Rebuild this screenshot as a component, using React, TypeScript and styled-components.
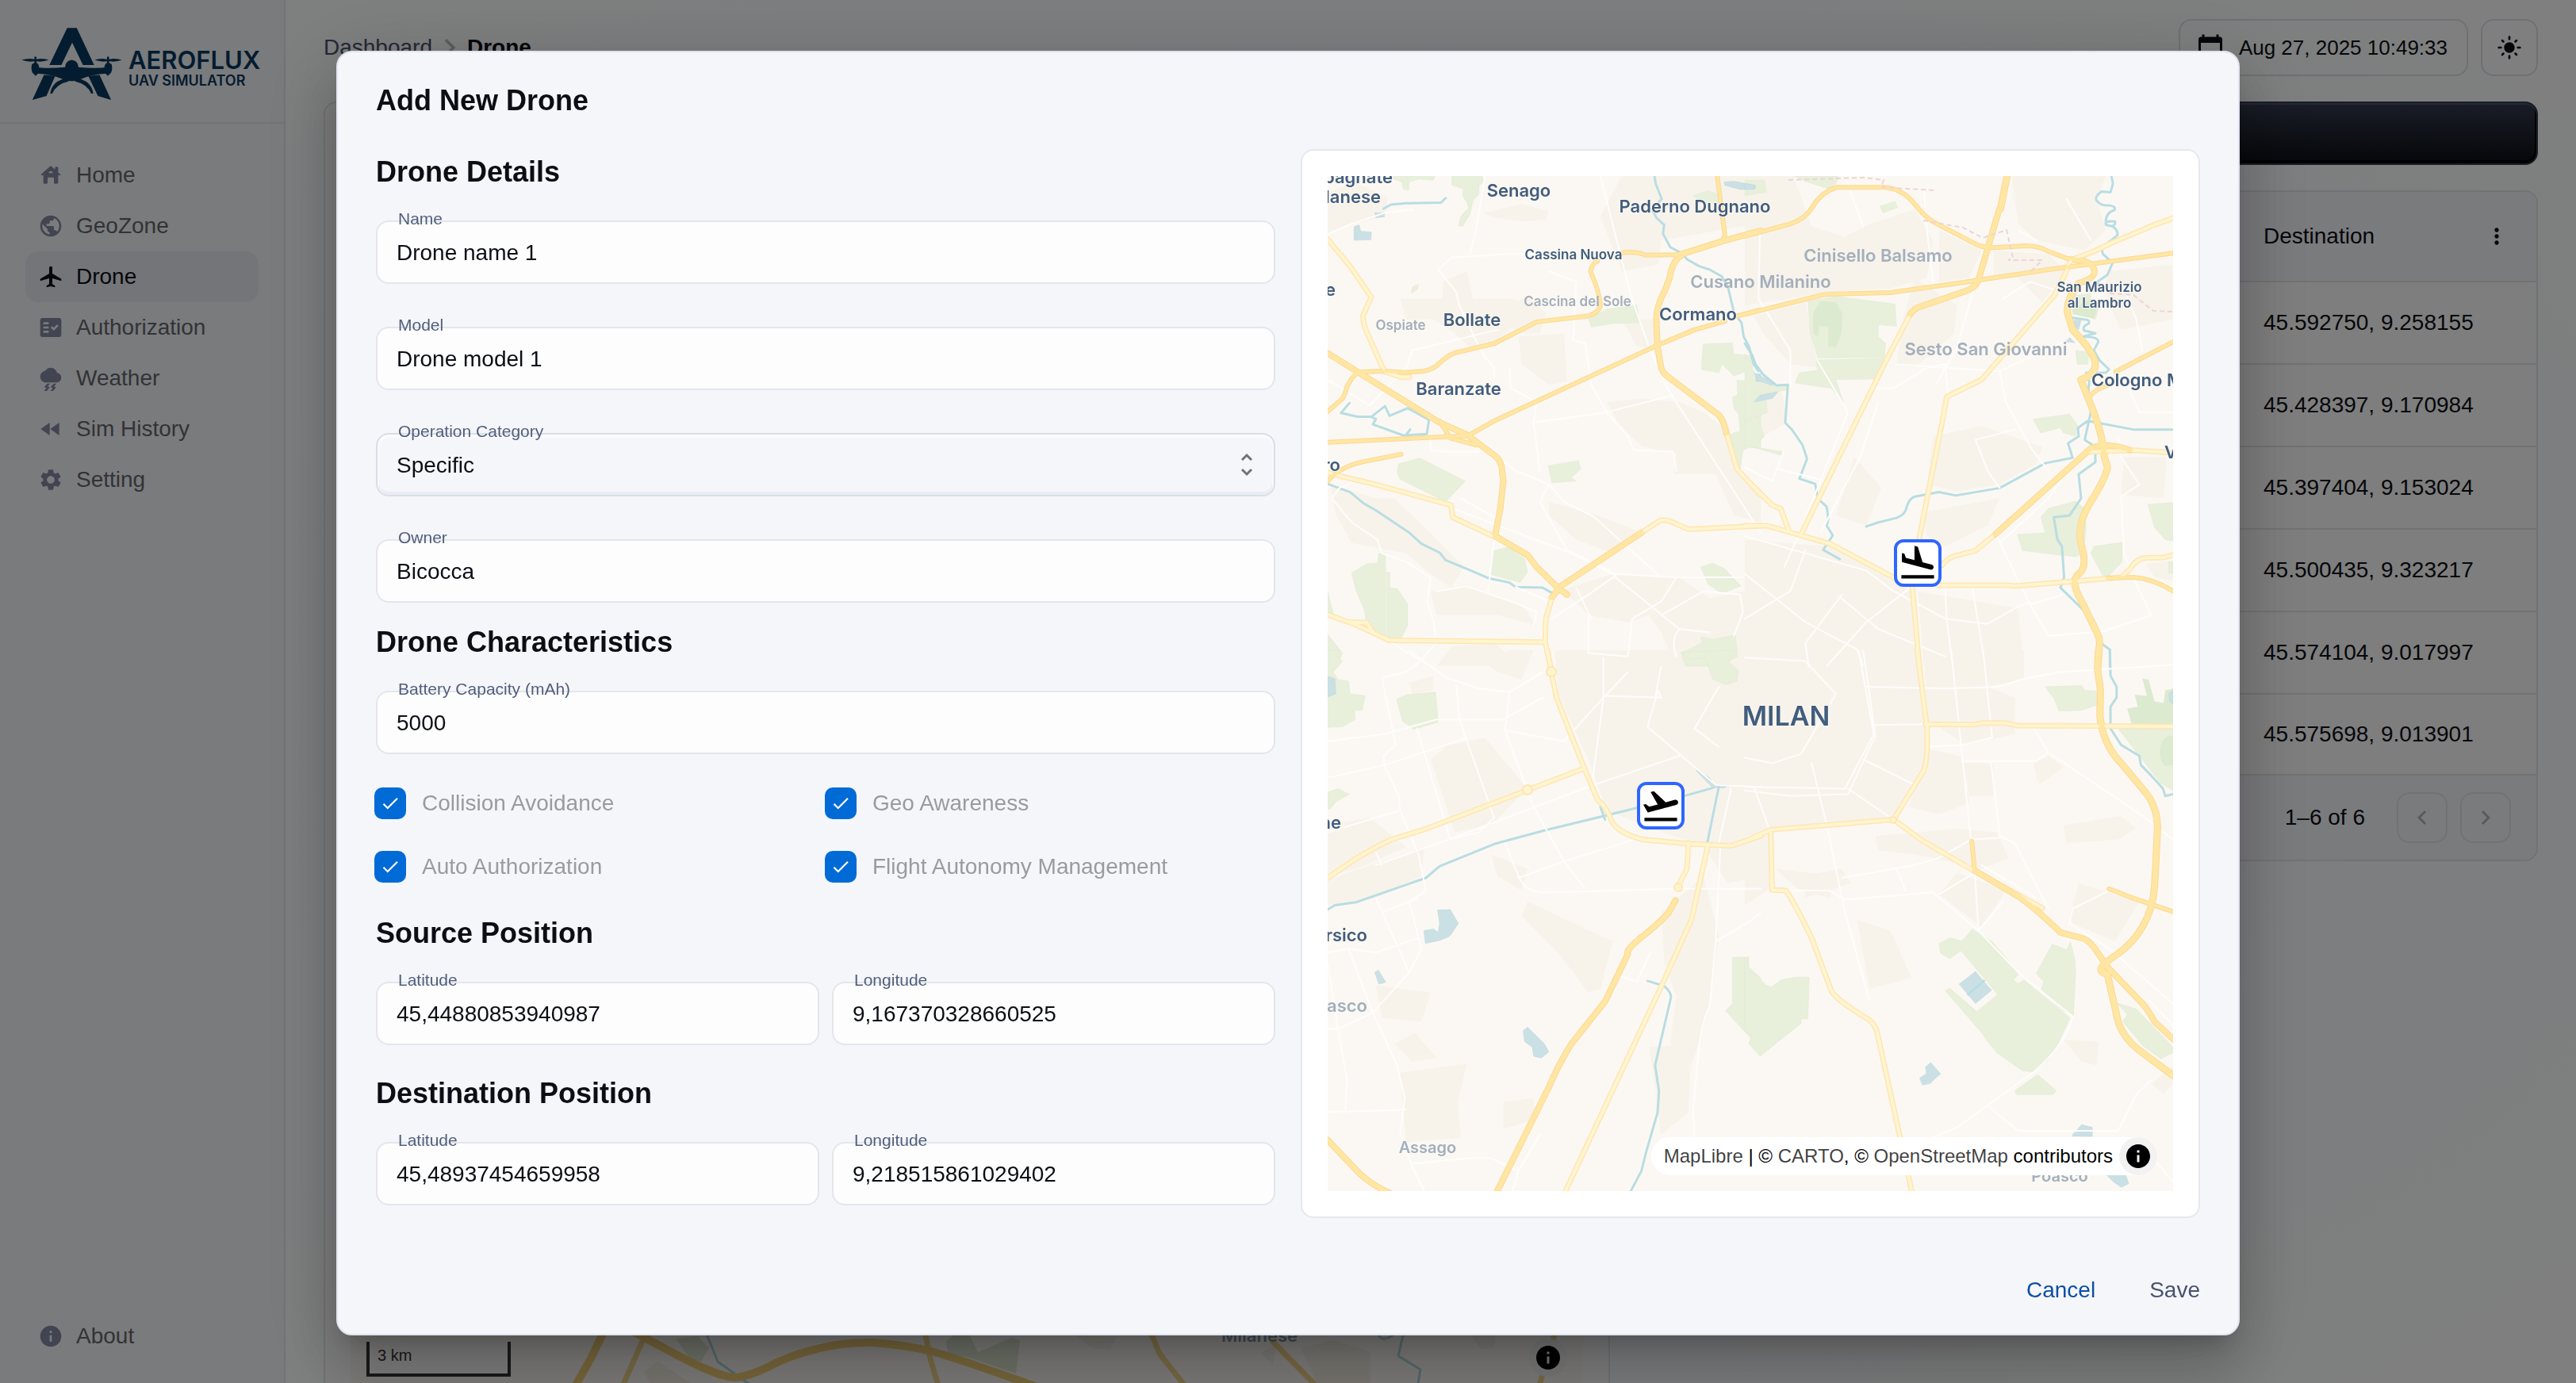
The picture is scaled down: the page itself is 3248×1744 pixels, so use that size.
import React from "react";
import styled, { createGlobalStyle, css } from "styled-components";
import {
  MdAirplanemodeActive,
  MdCalendarToday,
  MdCheck,
  MdFactCheck,
  MdFastRewind,
  MdFlightLand,
  MdFlightTakeoff,
  MdInfo,
  MdKeyboardArrowLeft,
  MdKeyboardArrowRight,
  MdLightMode,
  MdMoreVert,
  MdPublic,
  MdSettings,
  MdThunderstorm,
} from "react-icons/md";

const color = {
  ink: "#0b0e14",
  slate: "#47536b",
  label: "#515f7c",
  surface: "#f5f6fa",
  line: "#e4e6ec",
  strongLine: "#dadee7",
};

const GlobalStyle = createGlobalStyle`
  *, *::before, *::after { box-sizing: border-box; }
  html, body { margin: 0; height: 100%; overflow: hidden; }
  body {
    font-family: "Liberation Sans", Arial, sans-serif;
    font-size: 28px;
    line-height: 1.5;
    color: ${color.ink};
    background: radial-gradient(ellipse at 50% 50%, hsl(210, 100%, 97%), #ffffff);
  }
  button, input, select { font: inherit; color: inherit; }
  a { color: inherit; text-decoration: none; }
`;

/* ---------- Shell ---------- */

const Shell = styled.div`
  display: grid;
  grid-template-columns: 360px minmax(0, 1fr);
  grid-template-rows: minmax(0, 1fr);
  height: 100vh;
  overflow: hidden;
`;

const Sidebar = styled.aside`
  display: flex;
  flex-direction: column;
  background: ${color.surface};
  border-right: 2px solid #e4e6ec;
`;

const Brand = styled.div`
  display: flex;
  align-items: center;
  gap: 8px;
  height: 156px;
  padding: 8px 24px 0 26px;
  border-bottom: 2px solid #e4e6ec;
  color: #08385e;
  font-family: Inter, "Open Sans", sans-serif;
  font-weight: 600;
  white-space: nowrap;
`;

const BrandMark = styled.svg`
  flex: none;
  width: 128px;
  height: 92px;
`;

const BrandName = styled.div`
  font-size: 31px;
  line-height: 32px;
  padding-top: 10px;
`;

const BrandTag = styled.div`
  font-size: 18px;
  line-height: 20px;
`;

const Nav = styled.nav`
  display: flex;
  flex: 1;
  flex-direction: column;
  justify-content: space-between;
  padding: 33px 32px 27px;
`;

const NavList = styled.ul`
  margin: 0;
  padding: 0;
  list-style: none;
`;

const NavLink = styled.a<{ $active?: boolean }>`
  display: flex;
  align-items: center;
  gap: 16px;
  height: 64px;
  padding: 0 16px;
  border-radius: 16px;
  color: #65676c;
  svg {
    width: 32px;
    height: 32px;
    color: #838ba3;
  }
  ${(p) =>
    p.$active &&
    css`
      background: #e9ebf2;
      color: ${color.ink};
      svg {
        color: ${color.ink};
      }
    `}
`;

const Main = styled.main`
  display: flex;
  flex-direction: column;
  gap: 32px;
  min-width: 0;
  padding: 24px 48px;
`;

const TopBar = styled.header`
  display: flex;
  flex: none;
  align-items: center;
  justify-content: space-between;
  height: 72px;
`;

const Crumbs = styled.nav`
  display: flex;
  align-items: center;
  color: ${color.slate};
  svg {
    width: 44px;
    height: 44px;
    color: #b8babf;
  }
  strong {
    color: ${color.ink};
  }
`;

const TopActions = styled.div`
  display: flex;
  gap: 16px;
`;

const OutlineButton = styled.button<{ $square?: boolean }>`
  display: flex;
  align-items: center;
  justify-content: center;
  gap: 18px;
  height: 72px;
  min-width: 72px;
  padding: ${(p) => (p.$square ? "0" : "0 24px 0 20px")};
  border: 2px solid #dfe1ea;
  border-radius: 16px;
  background: transparent;
  font-size: 26px;
`;

const Board = styled.div`
  display: grid;
  grid-template-columns: repeat(12, minmax(0, 1fr));
  gap: 16px;
  align-items: start;
`;

const MapCard = styled.section`
  grid-column: span 7;
  padding: 32px;
  border: 2px solid ${color.line};
  border-radius: 16px;
  background: #fdfdfd;
`;

const SideColumn = styled.section`
  grid-column: span 5;
  display: flex;
  flex-direction: column;
  gap: 32px;
`;

const DarkButton = styled.button`
  height: 80px;
  border: 2px solid #333a4d;
  border-radius: 16px;
  background: linear-gradient(to bottom, #333a4d, #0b0e14);
  box-shadow: inset 0 2px 0 #47536b, inset 0 -2px 0 2px #000000;
`;

const TableCard = styled.div`
  border: 2px solid #e2e4ea;
  border-radius: 16px;
  background: #fdfdfd;
  overflow: hidden;
`;

const Table = styled.table`
  width: 100%;
  border-collapse: separate;
  border-spacing: 0;
  text-align: left;
  th,
  td {
    height: 104px;
    padding: 0 34px 0 20px;
    border-bottom: 2px solid #e2e4ea;
    font-weight: 400;
  }
  th {
    height: 114px;
    background: ${color.surface};
  }
  tr:last-child td {
    height: 102px;
  }
  th:last-child,
  td:last-child {
    width: 364px;
  }
`;

const HeadCell = styled.div`
  display: flex;
  align-items: center;
  justify-content: space-between;
`;

const IconButton = styled.button`
  display: grid;
  place-items: center;
  padding: 0;
  border: 0;
  background: none;
  svg {
    width: 32px;
    height: 32px;
  }
`;

const TableFoot = styled.div`
  display: flex;
  align-items: center;
  justify-content: flex-end;
  gap: 16px;
  height: 106px;
  padding: 0 32px;
  background: ${color.surface};
`;

const PageCount = styled.span`
  padding-right: 24px;
`;

const PageButton = styled.button`
  display: grid;
  place-items: center;
  width: 64px;
  height: 64px;
  border: 2px solid #e2e4ea;
  border-radius: 16px;
  background: none;
  color: #b4b6bb;
  svg {
    width: 36px;
    height: 36px;
  }
`;

/* ---------- Map pieces ---------- */

const MapFrame = styled.div<{ $tall?: boolean }>`
  position: relative;
  overflow: hidden;
  background: #fbf8f3;
  ${(p) =>
    p.$tall
      ? css`
          height: calc(100vh - 150px);
        `
      : css`
          aspect-ratio: 533 / 640;
        `}
`;

const MapSvg = styled.svg`
  display: block;
  width: 100%;
  height: 100%;
  font-family: Inter, "Open Sans", sans-serif;
  font-weight: 600;
`;

const Pin = styled.div<{ $x: number; $y: number }>`
  position: absolute;
  left: ${(p) => p.$x}%;
  top: ${(p) => p.$y}%;
  width: 60px;
  height: 60px;
  transform: translate(-50%, -50%);
  border: 4px solid #2f66ff;
  border-radius: 12px;
  background: #ffffff;
  color: #000000;
  svg {
    display: block;
    width: 52px;
    height: 52px;
  }
`;

const Attribution = styled.div`
  position: absolute;
  right: 20px;
  bottom: 20px;
  height: 48px;
  padding: 0 56px 0 16px;
  border-radius: 24px;
  background: #ffffff;
  color: #000000;
  font-size: 24px;
  line-height: 48px;
  white-space: nowrap;
  a {
    color: rgba(0, 0, 0, 0.75);
  }
`;

const InfoButton = styled.button`
  position: absolute;
  right: 20px;
  bottom: 20px;
  display: grid;
  place-items: center;
  width: 48px;
  height: 48px;
  padding: 0;
  border: 0;
  border-radius: 50%;
  background: #f2f2f2;
  color: #000000;
  svg {
    width: 36px;
    height: 36px;
  }
`;

const ScaleBar = styled.div`
  position: absolute;
  left: 20px;
  bottom: 20px;
  width: 182px;
  height: 44px;
  padding-left: 10px;
  border: 4px solid #333333;
  border-top: 0;
  background: rgba(255, 255, 255, 0.75);
  color: #333333;
  font-size: 20px;
  line-height: 34px;
`;

/* ---------- Dialog ---------- */

const Backdrop = styled.div`
  position: fixed;
  inset: 0;
  display: flex;
  align-items: flex-start;
  justify-content: center;
  padding: 64px;
  background: rgba(0, 0, 0, 0.5);
`;

const Dialog = styled.div`
  width: 100%;
  max-width: 2400px;
  border: 2px solid #dfe4ee;
  border-radius: 20px;
  background: ${color.surface};
  box-shadow: 0 22px 30px -14px rgba(0, 0, 0, 0.2), 0 48px 76px 6px rgba(0, 0, 0, 0.14),
    0 18px 92px 16px rgba(0, 0, 0, 0.12);
`;

const heading = css`
  margin: 0;
  font-size: 36px;
  line-height: 54px;
  font-weight: 700;
`;

const DialogTitle = styled.h2`
  ${heading}
  padding: 34px 48px;
`;

const DialogBody = styled.div`
  display: grid;
  grid-template-columns: repeat(2, minmax(0, 1fr));
  gap: 32px;
  padding: 0 48px;
`;

const DialogActions = styled.div`
  display: flex;
  justify-content: flex-end;
  gap: 36px;
  padding: 55px 32px 19px;
`;

const TextButton = styled.button<{ $primary?: boolean }>`
  height: 72px;
  padding: 0 16px;
  border: 0;
  border-radius: 16px;
  background: none;
  color: ${(p) => (p.$primary ? "#0a4fa6" : color.slate)};
`;

const MapPanel = styled.div`
  align-self: start;
  padding: 32px;
  border: 2px solid #e6e8f0;
  border-radius: 16px;
  background: #ffffff;
`;

const FormSection = styled.section<{ $top?: number }>`
  padding-top: ${(p) => p.$top ?? 0}px;
`;

const SectionTitle = styled.h3`
  ${heading}
  padding-top: 2px;
`;

const Fields = styled.div<{ $columns?: number }>`
  display: grid;
  grid-template-columns: repeat(${(p) => p.$columns ?? 1}, minmax(0, 1fr));
  gap: 20px 16px;
`;

const FieldBox = styled.div`
  position: relative;
  padding-top: 34px;
`;

const FieldLabel = styled.label`
  position: absolute;
  top: 20px;
  left: 28px;
  color: ${color.label};
  font-size: 21px;
  line-height: 24px;
`;

const control = css`
  display: block;
  width: 100%;
  height: 80px;
  margin: 0;
  padding: 1px 24px 0;
  border: 2px solid #e4e6ec;
  border-radius: 16px;
  background: #fdfdfd;
  outline: none;
`;

const TextInput = styled.input`
  ${control}
`;

const Select = styled.select`
  ${control}
  appearance: none;
  border-color: ${color.strongLine};
  background: ${color.surface};
  box-shadow: inset 0 2px 0 2px rgba(255, 255, 255, 0.6), inset 0 -2px 0 2px rgba(220, 227, 239, 0.5);
`;

const SelectArrows = styled.svg`
  position: absolute;
  right: 18px;
  bottom: 22px;
  width: 36px;
  height: 36px;
  pointer-events: none;
`;

const CheckGrid = styled.div`
  display: grid;
  grid-template-columns: repeat(2, minmax(0, 1fr));
  margin-left: -2px;
  padding-top: 22px;
`;

const CheckLabel = styled.label`
  display: flex;
  align-items: center;
  gap: 20px;
  height: 80px;
  color: #999b9f;
`;

const CheckWrap = styled.span`
  display: grid;
  place-items: center;
  color: #ffffff;
  > * {
    grid-area: 1 / 1;
  }
  svg {
    width: 26px;
    height: 26px;
    pointer-events: none;
  }
`;

const CheckInput = styled.input`
  width: 40px;
  height: 40px;
  margin: 0;
  border-radius: 10px;
  appearance: none;
  background: #d5dae4;
  &:checked {
    background: #006bd6;
  }
`;

/* ---------- Map data: four sheets that tile the city ---------- */

type Sheet = {
  transform: string;
  urban: string;
  parks: string;
  woods?: string;
  water: string;
  rivers: string;
  minor: string;
  primary: string;
  trunk: string;
  motorway: string;
};

const sheets: Sheet[] = [
  {
    transform: "translate(1620 160) scale(.38265 .43367)",
    urban:
      "M850 143H1110L1040 260 1110 420 1230 400 1240 330 1568 280V143ZM650 250L780 225 870 245 860 270 790 275 700 265ZM141 190L230 160 340 205 330 260 210 285 141 312ZM520 450L600 420 620 500 760 500 780 560 700 620 610 640 560 600 490 560 400 560 380 500 520 500ZM720 520L800 495 860 540 840 600 760 600ZM770 610L920 600 930 740 870 750 780 690ZM1110 560L1220 560 1230 640 1160 640ZM1060 800L1180 790 1300 800 1380 830 1440 870 1490 1000 1568 1080V1150L1480 1130 1420 1010 1280 1010 1290 950 1180 930 1140 900 1100 860ZM870 1090L1030 1130 1180 1180 1080 1240 960 1200 870 1130ZM150 1040L300 1080 360 1080 480 1180 590 1280 550 1340 480 1300 400 1240 220 1210 170 1130ZM900 1350L1080 1300 1300 1310 1400 1370 1568 1340V1568H1290L1240 1470 1200 1420 1130 1440 1000 1420 960 1380ZM480 1350L600 1330 780 1390 830 1450 700 1420 500 1420ZM550 1510L690 1500 780 1568H500Z",
    parks:
      "M355 143H495L490 155 440 152 410 160 408 185 390 180 385 160 360 152ZM550 143H650L655 160 640 170 640 195 620 215 610 255 585 290 572 288 580 260 605 235 600 220 585 200 588 180 550 170ZM417 485L420 465 440 458 438 470ZM1000 560L1060 530 1160 518 1170 570 1080 572 1010 582ZM1378 632L1475 628 1478 660 1545 665 1540 705 1480 724 1440 690 1430 715 1372 705ZM1490 737L1568 740V935L1530 932 1510 940 1500 1000 1485 990 1460 895 1500 885 1495 835 1480 820 1475 785 1492 780ZM375 980L445 963 595 1030 530 1090 380 1025 370 1005ZM868 985L968 970 975 995 945 1020 960 1030 880 1035ZM688 1232L735 1222 790 1255 800 1295 775 1325 680 1302ZM220 1297L270 1270 305 1268 310 1240 332 1240V1480L290 1460 270 1445 260 1400 235 1350ZM335 1295H346V1340L370 1342 405 1388V1450L385 1485 335 1490ZM1370 1280L1410 1268 1450 1285 1503 1335 1440 1357 1395 1330ZM1305 1530L1375 1500 1370 1482 1410 1490 1485 1477 1492 1540 1440 1568H1320ZM141 1475L190 1530 180 1555 141 1568ZM141 1350L160 1415H141ZM1345 200L1395 185 1440 200V225L1380 220Z",
    water:
      "M228 290L245 285 250 303 285 306 284 328 228 330ZM296 250H328V262L300 264ZM1447 160L1480 158 1550 170V180L1500 182 1450 170ZM1552 718H1568V740H1552Z",
    rivers:
      "M325 238L350 226 400 222 515 220 530 207M1218 143L1222 165 1242 210 1210 240 1225 265 1250 285 1246 310 1270 350 1310 368 1325 385 1365 405 1400 415 1440 435 1460 465 1472 510 1480 540 1505 570 1512 610 1530 640 1545 690 1560 710M141 1038L215 1062 260 1095 300 1115 410 1180 450 1212 510 1238 530 1260 600 1285 670 1312 740 1325 760 1338 850 1340 880 1355M213 803L185 832 240 843 285 843 330 812 345 840 405 818 475 852 468 893 390 897 290 865 300 850 285 843M400 895L413 880",
    minor:
      "M141 312L210 285 330 250 420 240M660 143L630 300 610 370M505 415L550 380 720 370 860 370M505 415L565 480 575 520 640 640 660 670 690 700V730M1040 143L1140 490 1200 640 1260 760 1568 1180M141 735L280 810 400 700 420 650 700 590M740 700L745 760 830 800 820 860 840 1000M815 860L1060 830 1280 780M870 420L960 450 950 620 990 630 1010 750 1060 830 1130 900 1150 940 1280 945 1290 1000M480 900L480 940 530 945 640 945M600 890L760 1000 870 1040 920 1090 1020 1135 1240 1310M870 1040L840 1090 930 1230 1090 1300 1280 1310 1510 1310M555 1110L930 1235 1090 1305M580 1080L640 1110 700 1140M155 1080L180 1050 240 1030M155 1080L220 1150 305 1200 320 1240 400 1265 480 1310 470 1380 490 1440 500 1500 430 1568M670 1350L690 1200M500 1350L600 1335 760 1385 830 1410 820 1450M350 1500L480 1568M880 1430L1000 1360 1090 1305M1000 1420L1000 1530 1130 1540 1145 1430 1240 1380 1290 1310M1090 1310L1300 1460 1400 1470M1300 1460Q1270 1490 1290 1540M1240 1420L1380 1350 1500 1360 1510 1410 1480 1480M960 1340L1010 1430M760 1338L860 1375",
    primary:
      "M141 327L215 405 285 495 257 550 262 580 318 692 330 712 385 728 410 727M141 1005L180 1015 300 1040 548 1100 553 1135 693 1193M1175 1180L1235 1145Q1260 1140 1290 1155L1330 1170 1568 1160M1455 890L1490 995 1568 1070M880 1370L860 1430 858 1498 875 1568M141 1418L235 1448 345 1493 858 1498M215 1440L270 1442 290 1468",
    trunk:
      "M141 828L190 790Q200 775 205 755Q225 720 245 713L320 710 400 714 460 710Q485 705 500 695 540 660 570 655L690 630 830 567 1000 550Q1035 540 1040 520 1037 480 1007 420 1015 395 1030 390M1107 367Q1150 360 1190 373L1300 372M1490 550L1568 532M141 917L600 898 620 890 690 855 1228 635 1350 590 1450 565M510 855L545 905 630 925M141 1030Q180 990 250 975L383 952M1425 143L1450 315 1440 333",
    motorway:
      "M141 658L250 718 510 860 600 895 690 955Q715 970 716 1000L720 1030 710 1110 693 1190 800 1245 830 1280 900 1340 930 1360M1300 372L1440 333 1568 302M1310 372Q1275 390 1268 440L1250 480Q1225 520 1224 560L1228 640 1240 700Q1245 715 1260 725L1430 838Q1445 850 1455 890M880 1368L910 1335 1175 1180",
  },
  {
    transform: "translate(2200 160) scale(.38265 .43367)",
    urban:
      "M0 143H160L220 290 330 320 420 280 560 240 620 330 600 440 480 470 280 480 0 520ZM640 300L780 360 740 440 640 450ZM820 360L1000 370 1060 420 980 510 900 440 820 440ZM880 143H1190L1160 210 1190 300 1120 360 960 330 900 280ZM30 550L200 510 240 700 150 690 60 600ZM560 440L700 520 690 600 560 700 500 690 520 560ZM1190 420L1411 400V560L1240 590 1190 500ZM620 900L780 870 980 930 960 980 840 1040 700 1060 600 1040ZM0 740L120 760 140 860 0 930ZM360 960L450 1050 400 1160 300 1130ZM0 1200L280 1220 490 1320 545 1340 575 1568H0ZM570 1350L900 1400 920 1568H590ZM590 1120L840 1080 800 1160 660 1220 600 1190ZM1250 960L1390 960 1380 1080 1240 1070ZM1320 1270L1411 1260V1320L1350 1310Z",
    parks:
      "M208 507L310 492 320 495 495 515 500 580 440 575 440 610 465 630 460 670 240 672 230 640 215 600ZM235 678L465 672 430 733 300 735 325 800 285 760 165 745 180 715 240 708ZM0 660L20 690 40 735 100 750 140 755 140 765 100 770 70 790 75 830 0 860ZM0 850L40 840 65 900 30 930 125 945 120 955 0 925ZM160 143H310L300 165 275 180 240 170 205 160ZM445 230L495 217 503 235 455 250ZM0 155L65 155 70 190 0 200ZM950 850L1070 835 1098 870 1090 900 1050 890 1040 875 975 890ZM898 1185L990 1180 975 1135 1000 1110 1090 1088 1120 1110 1125 1170 1115 1240 1090 1250 1035 1245 915 1232ZM1140 1240L1150 1220 1243 1208V1265L1200 1305H1180ZM1328 1098L1411 1092V1205L1385 1200 1350 1165ZM1078 490L1140 485V510L1165 530 1155 560 1080 540ZM1090 650L1135 655 1130 690 1095 690ZM1397 1265h14v33h-14z",
    woods:
      "M225 540L250 507 300 510 322 545 318 600 300 640 275 640 275 580 245 580 240 610 225 600ZM1080 530L1140 500 1160 535 1150 557 1080 545Z",
    water:
      "M30 715L100 745 90 752 45 738ZM30 800L50 780 110 770 90 790ZM1085 562H1108L1100 590 1085 580ZM1058 625L1070 612 1088 628ZM0 165L35 170 30 182H0Z",
    rivers:
      "M1208 143L1213 165 1205 190 1175 188Q1150 205 1160 215 1175 230 1195 228 1225 230 1218 242 1185 250 1190 285 1222 295 1220 275 1185 272 1190 285 1230 290 1228 315L1175 352 1180 370 1212 395 1195 430 1162 450 1165 460M1080 555L1115 560Q1140 560 1133 572 1110 580 1118 592L1155 600 1115 610Q1165 610 1165 625L1150 650 1170 680 1200 705 1190 715 1125 715 1135 740 1130 790 1140 830 1120 910 1155 930 1155 975 1100 1010 1108 1080 1070 1130 1018 1135 1030 1200 1045 1220 1052 1310 1040 1340 1110 1400 1155 1445M400 1162L440 1150 500 1137Q525 1128 530 1115 540 1080 560 1075L640 1062 695 1072 840 1050 990 978 1080 962 1065 920 1100 900 1098 875 1130 855 1280 880 1411 880M0 630L25 665 35 690 60 720 105 752 142 750 133 860 155 880 190 925 205 965 180 1023 232 1038 240 1080 270 1105 275 1140 270 1160 290 1188 258 1230 313 1257M1180 1505L1203 1520 1203 1568",
    minor:
      "M50 300L45 500 150 650V750M330 143L390 290M590 180L600 300 620 450M760 450L700 640 630 750M240 680L340 830 180 1180 130 1280M440 800L380 960 250 1180M410 760L490 760 600 700 660 690 670 780M840 710L860 800 940 930 1000 1000M500 690L650 700 840 710 1040 630M850 500L940 450 1040 480M760 910L800 1000 840 1050M760 910L890 880M0 990L90 1030 130 940M110 995L270 1030M0 1190L200 1240 400 1290 490 1350 660 1430 800 1445 890 1400 940 1380M545 1340L400 1440 270 1568M320 1360L200 1500 210 1568M660 1340L665 1430 685 1568M750 1340L785 1530M830 1190L940 1390 1000 1480 1140 1470M200 1230L150 1350 0 1430M310 1365L440 1460 660 1540M0 1300L200 1440 370 1520 390 1568M940 1390L1050 1360M1230 900L1240 960 1300 1040 1240 1075 1250 1240 1290 1330 1340 1420 1170 1470M1250 730L1300 830 1411 830M1250 470L1290 560 1310 650M1060 210L1140 330M900 300L960 330M840 1210L1000 1080 1040 1030",
    primary:
      "M545 545L465 680 185 1185M1411 265L1350 285 1215 335 1150 362 1080 385Q1065 395 1060 420L1020 490 780 735 665 785 652 850 575 1195M0 1160L75 1160 280 1212 490 1310M0 1020L90 1100 118 1110 145 1175M640 1333L870 1333 890 1335 1100 1320 1240 1310 1270 1285Q1290 1255 1320 1253L1380 1252 1411 1245M650 1275Q670 1250 700 1246L760 1232 825 1185M552 1340L575 1568M1135 945L1280 940 1411 948",
    trunk:
      "M0 318L150 282Q200 268 225 230T300 176H460Q520 180 560 225T640 285L770 345Q790 351 820 351L930 346Q970 347 1000 362L1060 382 1100 386M0 545L250 490Q260 487 300 486L480 482 700 455 1000 415 1411 367M1222 712L1411 625M1145 830L1135 785Q1150 765 1200 750M1195 1312L1280 1310Q1350 1315 1411 1350M860 143L838 240M868 143L846 240",
    motorway:
      "M838 240L770 445Q760 470 720 480L570 525Q550 535 545 545M825 1185L1140 935Q1190 915 1270 940M1085 386L1120 390Q1150 400 1152 420T1100 455",
  },
  {
    transform: "translate(1620 820) scale(.38265 .45918)",
    urban:
      "M650 30L740 0H820L780 80 700 60ZM890 0H1568V620L1460 640 1380 540 1180 480 1060 440 1000 300 900 120ZM540 260L660 240 800 380 680 480 560 500 480 300ZM141 480L280 460 400 540 240 600 141 620ZM141 630L460 540 450 620 300 680 141 700ZM800 690L1080 800 1040 930 1000 940 900 830 780 730ZM1240 720L1380 620 1430 780 1400 980 1340 1140 1270 1080 1290 950 1250 860ZM380 1160L600 1135 570 1240 580 1340 400 1350ZM360 1080L430 1050 500 1120 420 1130ZM1200 1090L1340 1080 1330 1270 1240 1330 1220 1200ZM720 1240L820 1230 820 1290 720 1315ZM680 560L800 600 780 660 700 620ZM300 920L480 940 450 1020 320 1010ZM1310 1020L1380 1010 1370 1080 1310 1080ZM410 90L490 70 490 110 420 120Z",
    parks:
      "M141 0H180L175 20 190 30 160 60 175 80 210 85 215 120 265 125 255 165 230 165 232 190 190 210 141 212ZM368 135L400 122 497 115 505 198 425 217 388 195ZM141 390L175 380 213 395 170 415 150 435H141ZM1305 5L1335 25 1385 20 1410 80 1455 95 1490 85 1495 55 1460 30 1490 0ZM1475 843H1528V870L1568 900V1115L1530 1080 1535 1065 1452 990 1475 970Z",
    water:
      "M141 72L165 78 168 120 141 128ZM503 713L545 712 572 750 548 780 540 787 510 797 463 805 458 770 490 765 505 775 510 750ZM296 885L308 878 333 912 310 917ZM785 1045L800 1035 855 1080 870 1103 845 1120 820 1115 815 1090 790 1075ZM1355 328L1400 350 1415 370 1462 370 1450 378 1410 378 1360 335Z",
    rivers:
      "M141 712L165 700 235 692 465 625 510 593 690 532 855 495 1160 433M1317 400L1410 378M1195 908L1250 922Q1275 940 1272 955L1220 1140 1233 1210 1228 1270 1190 1380 1175 1430 1140 1485M1040 430L1055 465M1430 375L1393 525",
    minor:
      "M410 0L530 75 640 105 740 115 850 60M320 75L400 60 460 20M320 75L365 260 325 290 330 320 375 400 380 440 440 560 465 660 410 690 450 820 410 885 290 995 370 1140 395 1230 380 1330 420 1420 460 1485M141 250L330 230 500 190 720 190 850 130M565 95L575 190 690 460 640 500 540 520 300 590M435 215L545 520M740 120L725 220 820 430 920 580 990 655M725 220L920 250 1050 130 1130 60M141 350L330 315 600 240M141 500L380 440M1050 20V130L1015 350M1050 125L1240 130 1230 110 1195 210 1420 370 1568 375M1240 45L1220 130M400 560L540 520 1000 375 1300 290M300 555L320 590M725 530L770 620Q790 665 860 665L1300 655 1568 655M770 625L920 580 1150 520M1430 530L1470 380M1435 540L1420 800 1400 980Q1370 1020 1360 1130L1345 1260 1350 1340M1420 800L1540 740 1568 720M141 830L210 820 300 830 440 790M320 720L440 680M300 680L410 885M210 820L290 995 175 1040 141 1040M141 860L175 1040 205 1180 200 1260M141 1268L400 1262M420 1410L600 1395 680 1395 770 1430 840 1330M770 1430L750 1485M1110 895L1160 910 1205 830M1350 215L1430 100M1350 215L1430 265",
    primary:
      "M865 0L878 60 895 130 985 320 1030 410Q1060 430 1075 465T1180 520L1340 532 1470 537 1568 510M141 625L235 572Q300 540 350 520L460 492 800 384 985 325M1330 530L1325 600 1295 650M1393 540L1340 740 1245 915 925 1485",
    trunk: "",
    motorway:
      "M1287 687L1265 720Q1240 745 1180 785T1130 835L1055 965 945 1080Q900 1140 870 1200L700 1485M141 1345L250 1440Q300 1475 345 1490",
  },
  {
    transform: "translate(2200 820) scale(.38265 .45918)",
    urban:
      "M0 0H568L600 210 590 330 490 465 85 493 0 515ZM590 0H920V80L800 100 890 130V230L730 260 600 190ZM600 270L710 290 740 420 640 450 540 430ZM0 520L80 500 90 650 0 700ZM430 510L700 490 830 500 870 570 780 600 560 560 440 550ZM100 600L300 620 280 680 180 660ZM700 610L860 660 780 760 640 670ZM370 740L480 770 550 900 410 930ZM1050 480L1240 455 1290 490 1230 520 1060 530ZM950 310L1000 290 1050 320 970 370ZM1070 730L1100 640 1300 690 1220 800 1080 750ZM1050 1070L1165 1075 1160 1140 1110 1130ZM1340 1190L1411 1140V1190L1380 1220ZM190 620L320 600 350 640 200 680ZM720 310H820V400H740Z",
    parks:
      "M0 843H12V868L70 920 88 925 120 905 165 898H212L208 1012 185 1012 185 1025 50 1115 13 1080 30 1065 0 1045ZM640 805L675 790 715 798 750 766 815 800 905 888 885 905 900 915 920 905 1072 1010 1030 1085 1000 1125 950 1158 915 1155 830 1105 800 1075 780 1050 660 935 675 928 765 992 833 945 712 825 675 847 645 832ZM1013 807L1060 822 1073 800 1088 850 1090 890 1083 1003 1050 990 975 935 985 910 960 888ZM890 1210L965 1165 1027 1210 1015 1220H895ZM990 100L1110 97 1120 110 1160 112V150L1110 165 1035 167 1020 135ZM1230 215H1411V385L1370 365 1290 280ZM1225 968L1290 985 1411 1090V1105L1370 1122 1310 1085 1245 1020 1260 1000Z",
    woods:
      "M1260 160L1295 155 1285 122 1325 125 1310 78 1330 80 1350 140 1380 145 1385 110 1411 105V205H1275ZM1375 250Q1395 230 1411 235V315L1385 318Q1365 300 1368 270Z",
    water:
      "M706 917L760 882 813 934 760 970ZM576 1175L598 1163 595 1145 612 1132 645 1163 610 1190 585 1194ZM1080 1330L1110 1303 1145 1310V1335H1080ZM1190 1440H1255L1265 1465 1240 1475 1215 1460ZM1397 120L1411 110V148L1400 140Z",
    rivers:
      "M1203 0L1205 70 1225 100 1225 130 1205 155 1205 215 1240 260 1300 290 1305 315 1340 345 1378 380 1385 400 1411 395M736 945L788 908",
    minor:
      "M0 375L330 380 425 230 375 0M0 385L150 400 340 395 430 235 390 0M400 100L660 105 840 100 910 80 1040 60 1411 40M430 205L590 203M0 20L200 30 300 120 185 285 90 310 0 295M220 310L270 480 330 720 410 960M30 375L80 490M390 300L560 370M340 380L480 460M680 0L745 520 760 640 770 770M785 0L815 240 720 260 600 265M810 300L840 510 890 530 1000 710M725 305L960 305 1000 280 950 210M1000 280L1320 460 1411 520M640 570L745 520 840 515M320 625L560 590 640 570M90 660L280 660 330 685 620 665 770 770 905 888 1080 1005Q1060 1080 950 1160L700 1310 600 1345M800 1250L900 1320 1230 1320 1290 1220 1340 1180M640 670L760 610M770 770L850 690M780 590L960 680M1200 660L1080 710 1070 750 1200 820 1411 970M1330 960L1411 1030M1340 1390L1411 1460M500 600L530 660",
    primary:
      "M568 0L600 210Q605 290 590 330L490 465 85 493 0 525M595 203L760 204 780 200 860 200 900 207 1411 209M495 468L580 520 760 608 980 708M85 493L90 658 135 660Q155 680 220 790L285 935Q300 960 410 1015 425 1025 435 1045L550 1485",
    trunk:
      "M748 525L757 605M1200 655L1270 678 1411 718",
    motorway:
      "M757 605L900 675Q960 710 1040 775L1110 790Q1130 795 1150 815L1195 870 1310 970Q1330 990 1350 1020L1411 1068",
  },
];

const ringRoad = [
  {
    transform: "translate(2200 160) scale(.38265 .43367)",
    d: "M1100 455Q1060 500 1063 540L1080 590Q1155 660 1155 690T1107 735L1150 830Q1180 900 1185 960L1195 990Q1190 1020 1140 1090T1110 1220 1100 1300 1110 1380L1160 1470Q1172 1490 1168 1510L1163 1575",
  },
  {
    transform: "translate(2200 820) scale(.38265 .45918)",
    d: "M1165 0L1162 50 1172 110 1170 180Q1180 260 1240 310L1320 390Q1360 430 1360 490L1350 650Q1345 710 1310 760T1210 845 1195 890L1230 1020Q1250 1070 1310 1105L1411 1168",
  },
];

type Place = {
  text: string;
  x: number;
  y: number;
  size?: number;
  muted?: boolean;
  anchor?: "start" | "end";
};

const places: Place[] = [
  { text: "bagnate", x: 1756, y: 231, anchor: "end" },
  { text: "lanese", x: 1741, y: 256, anchor: "end" },
  { text: "Senago", x: 1915, y: 248 },
  { text: "Paderno Dugnano", x: 2137, y: 268 },
  { text: "Cassina Nuova", x: 1984, y: 327, size: 17 },
  { text: "Cascina del Sole", x: 1989, y: 386, size: 17, muted: true },
  { text: "Cusano Milanino", x: 2220, y: 363, muted: true },
  { text: "Cinisello Balsamo", x: 2368, y: 330, muted: true },
  { text: "e", x: 1684, y: 373, anchor: "end" },
  { text: "Ospiate", x: 1766, y: 416, size: 17, muted: true },
  { text: "Bollate", x: 1856, y: 411 },
  { text: "Cormano", x: 2141, y: 404 },
  { text: "Baranzate", x: 1839, y: 498 },
  { text: "ro", x: 1690, y: 594, anchor: "end" },
  { text: "San Maurizio", x: 2647, y: 368, size: 17 },
  { text: "al Lambro", x: 2647, y: 388, size: 17 },
  { text: "Sesto San Giovanni", x: 2504, y: 448, muted: true },
  { text: "Cologno M", x: 2637, y: 487, anchor: "start" },
  { text: "V", x: 2729, y: 578, anchor: "start" },
  { text: "MILAN", x: 2252, y: 915, size: 34 },
  { text: "ne", x: 1691, y: 1045, anchor: "end" },
  { text: "rsico", x: 1724, y: 1187, anchor: "end" },
  { text: "asco", x: 1724, y: 1276, anchor: "end", muted: true },
  { text: "Assago", x: 1800, y: 1454, size: 20, muted: true },
  { text: "Poasco", x: 2597, y: 1490, size: 20, muted: true },
];

const ns = { vectorEffect: "non-scaling-stroke" as const };

type Layer = { key: keyof Sheet; stroke: string; width: number };
const strokes: Layer[] = [
  { key: "rivers", stroke: "#b9dde2", width: 3 },
  { key: "minor", stroke: "#fefdfb", width: 2 },
  { key: "primary", stroke: "#ffe5b3", width: 7 },
  { key: "trunk", stroke: "#fcd894", width: 6 },
  { key: "motorway", stroke: "#fcd894", width: 8 },
  { key: "primary", stroke: "#fff5ce", width: 4 },
  { key: "trunk", stroke: "#ffe6a3", width: 4 },
  { key: "motorway", stroke: "#ffe6a3", width: 6 },
];
const fills: { key: keyof Sheet; fill: string; edge: string }[] = [
  { key: "urban", fill: "#f7f3eb", edge: "none" },
  { key: "parks", fill: "#e8efdb", edge: "#dfe8cf" },
  { key: "woods", fill: "#dceacf", edge: "none" },
  { key: "water", fill: "#cbe0e4", edge: "#b4d3d9" },
];

function CityMap() {
  return (
    <MapSvg viewBox="1674 222 1066 1280" preserveAspectRatio="xMidYMid slice" role="img" aria-label="Milan">
      {fills.map((layer) => (
        <g key={layer.key} fill={layer.fill} stroke={layer.edge} strokeWidth="1">
          {sheets.map((s) => (
            <path key={s.transform} transform={s.transform} d={s[layer.key] ?? ""} />
          ))}
        </g>
      ))}
      {strokes.map((layer, i) => (
        <g key={i} fill="none" stroke={layer.stroke} strokeWidth={layer.width} strokeLinecap="round" strokeLinejoin="round">
          {sheets.map((s) => (
            <path key={s.transform} transform={s.transform} d={s[layer.key] ?? ""} {...ns} />
          ))}
          {layer.key === "motorway" &&
            ringRoad.map((r) => (
              <path key={r.transform} transform={r.transform} d={r.d} strokeWidth={layer.width + 1} {...ns} />
            ))}
        </g>
      ))}
      <path
        d="M2255 227L2350 224 2375 227 2372 236 2440 240M2425 278L2475 287 2500 300 2530 290 2538 325 2532 328 2575 328 2560 343M2660 370L2690 372 2715 392 2740 393"
        fill="none"
        stroke="#eed3d6"
        strokeWidth="2"
        strokeDasharray="6 4"
      />
      <g fill="#fff5ce" stroke="#ffe5b3" strokeWidth="2">
        <circle cx="1956" cy="847" r="6" />
        <circle cx="1926" cy="996" r="6" />
        <circle cx="2116" cy="1119" r="5" />
        <circle cx="2387" cy="1034" r="4" />
      </g>
      {places.map((p) => (
        <text
          key={p.text}
          x={p.x}
          y={p.y}
          fontSize={p.size ?? 22}
          textAnchor={p.anchor ?? "middle"}
          fill={p.muted ? "#a3afbc" : "#425d7d"}
          stroke={p.muted ? "none" : "#fbf8f3"}
          strokeWidth="2"
          paintOrder="stroke"
        >
          {p.text}
        </text>
      ))}
    </MapSvg>
  );
}

function OverviewMap() {
  return (
    <MapSvg viewBox="442 162 1554 1594" preserveAspectRatio="xMidYMax slice" role="img" aria-label="Overview">
      <path
        fill="#dde6d0"
        d="M852 1688L880 1685 894 1700 884 1717 870 1713ZM1202 1684H1223L1233 1705 1275 1687 1286 1690 1281 1732 1226 1713 1195 1706 1193 1691Z"
      />
      <path
        fill="#f3eee4"
        d="M812 1730L830 1716 870 1744H820ZM1357 1684L1408 1686 1400 1702 1376 1700ZM1590 1706L1610 1694 1605 1722ZM1640 1700L1680 1690 1728 1704V1744H1660ZM1855 1684L1886 1684 1884 1700 1868 1702Z"
      />
      <g fill="none" strokeLinejoin="round" strokeLinecap="round">
        <path
          stroke="#a9d3dc"
          strokeWidth="3"
          d="M890 1680L905 1717 951 1750M1770 1680L1763 1710 1770 1714 1791 1727 1787 1750M1737 1680Q1740 1694 1756 1684"
        />
        <path
          stroke="#f2d48a"
          strokeWidth="7"
          d="M815 1680L784 1750M1166 1680L1174 1717 1184 1750M1451 1680L1462 1707 1496 1750M1961 1680L1940 1750M1605 1692L1662 1750"
        />
        <path
          stroke="#f2cf78"
          strokeWidth="10"
          d="M761 1680L745 1713 724 1750M800 1680L856 1710Q908 1737 926 1737T982 1717Q1040 1692 1100 1693 1140 1696 1170 1703T1310 1750"
        />
      </g>
      <text x="1588" y="1692" fontSize="22" textAnchor="middle" fill="#8493a5">
        Milanese
      </text>
    </MapSvg>
  );
}

function Logo() {
  return (
    <BrandMark viewBox="26 36 128 92" aria-hidden="true" fill="currentColor">
      <g transform="scale(.52296 .42092)">
        <path d="M162 86H185L227 197H200L174 130 148 197H119Z" />
        <path d="M106 227L133 230 112 290 78 302ZM213 230L240 227 268 302 236 290Z" />
        <path d="M85 203Q110 209 157 204Q158 184 173 182Q188 184 189 204Q235 209 262 203V222Q215 226 194 240Q187 245 173 245Q158 245 152 240Q130 226 85 222Z" />
        <path d="M52 182Q68 176 83 180V172H88V180Q104 176 118 182Q102 189 88 186V190Q93 194 94 200V220L86 230 78 220Q74 206 77 195L83 190V186Q66 189 52 182Z" />
        <path d="M294 182Q278 176 263 180V172H258V180Q242 176 228 182Q244 189 258 186V190Q253 194 252 200V220L260 230 268 220Q272 206 269 195L263 190V186Q280 189 294 182Z" />
        <path d="M158 238Q126 244 121 283H126Q136 254 166 246ZM188 238Q220 244 225 283H220Q210 254 180 246Z" />
      </g>
    </BrandMark>
  );
}

const HouseIcon = () => (
  <svg viewBox="0 0 24 24" fill="currentColor" aria-hidden="true">
    <path d="M19 9.3V5c0-.55-.45-1-1-1h-1c-.55 0-1 .45-1 1v1.6l-3.33-3c-.38-.34-.96-.34-1.34 0l-8.36 7.53c-.34.3-.13.87.33.87H5v7c0 .55.45 1 1 1h2c.55 0 1-.45 1-1v-4c0-.55.45-1 1-1h4c.55 0 1 .45 1 1v4c0 .55.45 1 1 1h2c.55 0 1-.45 1-1v-7h1.7c.46 0 .68-.57.33-.87L19 9.3zm-9 .7c0-1.1.9-2 2-2s2 .9 2 2h-4z" />
  </svg>
);

/* ---------- Content ---------- */

const navItems = [
  { label: "Home", icon: <HouseIcon /> },
  { label: "GeoZone", icon: <MdPublic /> },
  { label: "Drone", icon: <MdAirplanemodeActive />, active: true },
  { label: "Authorization", icon: <MdFactCheck /> },
  { label: "Weather", icon: <MdThunderstorm /> },
  { label: "Sim History", icon: <MdFastRewind /> },
  { label: "Setting", icon: <MdSettings /> },
];

const destinations = [
  "45.592750, 9.258155",
  "45.428397, 9.170984",
  "45.397404, 9.153024",
  "45.500435, 9.323217",
  "45.574104, 9.017997",
  "45.575698, 9.013901",
];

const options = ["Collision Avoidance", "Geo Awareness", "Auto Authorization", "Flight Autonomy Management"];

function Field({ id, label, value }: { id: string; label: string; value: string }) {
  return (
    <FieldBox>
      <TextInput id={id} defaultValue={value} />
      <FieldLabel htmlFor={id}>{label}</FieldLabel>
    </FieldBox>
  );
}

function DroneForm() {
  return (
    <form>
      <FormSection>
        <SectionTitle>Drone Details</SectionTitle>
        <Fields>
          <Field id="name" label="Name" value="Drone name 1" />
          <Field id="model" label="Model" value="Drone model 1" />
          <FieldBox>
            <Select id="category" defaultValue="Specific">
              <option>Specific</option>
            </Select>
            <SelectArrows viewBox="0 0 24 24" fill="none" stroke="#6f7277" strokeWidth="2" aria-hidden="true">
              <path d="M8 8L12 4 16 8M8 16L12 20 16 16" />
            </SelectArrows>
            <FieldLabel htmlFor="category">Operation Category</FieldLabel>
          </FieldBox>
          <Field id="owner" label="Owner" value="Bicocca" />
        </Fields>
      </FormSection>
      <FormSection $top={21}>
        <SectionTitle>Drone Characteristics</SectionTitle>
        <Fields>
          <Field id="battery" label="Battery Capacity (mAh)" value="5000" />
        </Fields>
        <CheckGrid>
          {options.map((name) => (
            <CheckLabel key={name}>
              <CheckWrap>
                <CheckInput type="checkbox" defaultChecked />
                <MdCheck />
              </CheckWrap>
              {name}
            </CheckLabel>
          ))}
        </CheckGrid>
      </FormSection>
      <FormSection $top={15}>
        <SectionTitle>Source Position</SectionTitle>
        <Fields $columns={2}>
          <Field id="source-lat" label="Latitude" value="45,44880853940987" />
          <Field id="source-lng" label="Longitude" value="9,167370328660525" />
        </Fields>
      </FormSection>
      <FormSection $top={32}>
        <SectionTitle>Destination Position</SectionTitle>
        <Fields $columns={2}>
          <Field id="dest-lat" label="Latitude" value="45,48937454659958" />
          <Field id="dest-lng" label="Longitude" value="9,218515861029402" />
        </Fields>
      </FormSection>
    </form>
  );
}

export default function App() {
  return (
    <>
      <GlobalStyle />
      <Shell>
        <Sidebar>
          <Brand>
            <Logo />
            <div>
              <BrandName>AEROFLUX</BrandName>
              <BrandTag>UAV SIMULATOR</BrandTag>
            </div>
          </Brand>
          <Nav>
            <NavList>
              {navItems.map((item) => (
                <li key={item.label}>
                  <NavLink href="#" $active={item.active}>
                    {item.icon}
                    {item.label}
                  </NavLink>
                </li>
              ))}
            </NavList>
            <NavLink href="#">
              <MdInfo />
              About
            </NavLink>
          </Nav>
        </Sidebar>
        <Main>
          <TopBar>
            <Crumbs>
              <a href="#">Dashboard</a>
              <MdKeyboardArrowRight />
              <strong>Drone</strong>
            </Crumbs>
            <TopActions>
              <OutlineButton>
                <MdCalendarToday size={36} />
                Aug 27, 2025 10:49:33
              </OutlineButton>
              <OutlineButton $square aria-label="Theme">
                <MdLightMode size={32} />
              </OutlineButton>
            </TopActions>
          </TopBar>
          <Board>
            <MapCard>
              <MapFrame $tall>
                <OverviewMap />
                <ScaleBar>3 km</ScaleBar>
                <InfoButton aria-label="Map credits">
                  <MdInfo />
                </InfoButton>
              </MapFrame>
            </MapCard>
            <SideColumn>
              <DarkButton aria-label="Add" />
              <TableCard>
                <Table>
                  <thead>
                    <tr>
                      <th aria-hidden="true" />
                      <th>
                        <HeadCell>
                          Destination
                          <IconButton aria-label="Column menu">
                            <MdMoreVert />
                          </IconButton>
                        </HeadCell>
                      </th>
                    </tr>
                  </thead>
                  <tbody>
                    {destinations.map((d) => (
                      <tr key={d}>
                        <td aria-hidden="true" />
                        <td>{d}</td>
                      </tr>
                    ))}
                  </tbody>
                </Table>
                <TableFoot>
                  <PageCount>1–6 of 6</PageCount>
                  <PageButton aria-label="Previous page">
                    <MdKeyboardArrowLeft />
                  </PageButton>
                  <PageButton aria-label="Next page">
                    <MdKeyboardArrowRight />
                  </PageButton>
                </TableFoot>
              </TableCard>
            </SideColumn>
          </Board>
        </Main>
      </Shell>
      <Backdrop>
        <Dialog role="dialog" aria-modal="true" aria-labelledby="dialog-title">
          <DialogTitle id="dialog-title">Add New Drone</DialogTitle>
          <DialogBody>
            <DroneForm />
            <MapPanel>
              <MapFrame>
                <CityMap />
                <Pin $x={69.8} $y={38.1}>
                  <MdFlightLand />
                </Pin>
                <Pin $x={39.4} $y={62}>
                  <MdFlightTakeoff />
                </Pin>
                <Attribution>
                  <a href="#">MapLibre</a> | © <a href="#">CARTO</a>, © <a href="#">OpenStreetMap</a> contributors
                </Attribution>
                <InfoButton aria-label="Map credits">
                  <MdInfo />
                </InfoButton>
              </MapFrame>
            </MapPanel>
          </DialogBody>
          <DialogActions>
            <TextButton $primary>Cancel</TextButton>
            <TextButton>Save</TextButton>
          </DialogActions>
        </Dialog>
      </Backdrop>
    </>
  );
}
